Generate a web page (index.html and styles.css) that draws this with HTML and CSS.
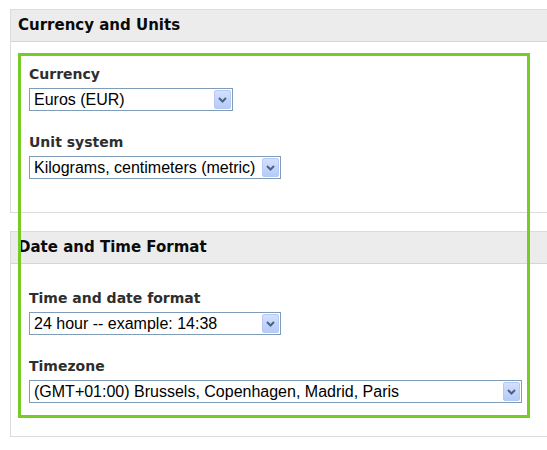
FILE: index.html
```html
<!DOCTYPE html>
<html>
<head>
<meta charset="utf-8">
<link rel="stylesheet" href="styles.css">
</head>
<body>
<div class="page">
  <section class="panel">
    <div class="panel-head">Currency and Units</div>
    <div class="panel-body">
      <div class="field">
        <div class="label">Currency</div>
        <div class="select w-sm"><span class="value">Euros (EUR)</span><span class="btn"><svg width="9" height="6" viewBox="0 0 9 6"><path d="M1 1 L4.5 4.5 L8 1" fill="none" stroke="#4d6185" stroke-width="2"/></svg></span></div>
      </div>
      <div class="field">
        <div class="label">Unit system</div>
        <div class="select w-md"><span class="value">Kilograms, centimeters (metric)</span><span class="btn"><svg width="9" height="6" viewBox="0 0 9 6"><path d="M1 1 L4.5 4.5 L8 1" fill="none" stroke="#4d6185" stroke-width="2"/></svg></span></div>
      </div>
    </div>
  </section>
  <section class="panel panel-2">
    <div class="panel-head">Date and Time Format</div>
    <div class="panel-body body-2">
      <div class="field">
        <div class="label">Time and date format</div>
        <div class="select w-md"><span class="value">24 hour -- example: 14:38</span><span class="btn"><svg width="9" height="6" viewBox="0 0 9 6"><path d="M1 1 L4.5 4.5 L8 1" fill="none" stroke="#4d6185" stroke-width="2"/></svg></span></div>
      </div>
      <div class="field">
        <div class="label">Timezone</div>
        <div class="select w-lg"><span class="value">(GMT+01:00) Brussels, Copenhagen, Madrid, Paris</span><span class="btn"><svg width="9" height="6" viewBox="0 0 9 6"><path d="M1 1 L4.5 4.5 L8 1" fill="none" stroke="#4d6185" stroke-width="2"/></svg></span></div>
      </div>
    </div>
  </section>
  <div class="highlight"></div>
</div>
</body>
</html>
```

FILE: styles.css
```css
html, body {
  margin: 0;
  padding: 0;
  background: #ffffff;
  overflow: hidden;
}
.page {
  position: relative;
  width: 547px;
  height: 450px;
  padding-top: 9px;
  box-sizing: border-box;
}
.panel {
  margin-left: 10px;
  margin-right: -20px;
  border: 1px solid #dcdcdc;
  background: #ffffff;
}
.panel-2 {
  margin-top: 18px;
}
.panel-head {
  height: 31px;
  line-height: 31px;
  background: #ececec;
  border-bottom: 1px solid #d6d6d6;
  padding-left: 7px;
  font-family: "DejaVu Sans", Verdana, sans-serif;
  font-weight: bold;
  font-size: 15px;
  color: #0a0a0a;
}
.panel-body {
  padding: 24px 18px 33px 18px;
  display: flex;
  flex-direction: column;
  gap: 23px;
}
.body-2 {
  padding-top: 26px;
  padding-bottom: 33px;
}
.field {
  display: flex;
  flex-direction: column;
  gap: 5px;
}
.label {
  font-family: "DejaVu Sans", Verdana, sans-serif;
  font-weight: bold;
  font-size: 14px;
  line-height: 17px;
  color: #2e2e2e;
}
.select {
  box-sizing: border-box;
  height: 23px;
  border: 1px solid #7f9db9;
  background: #ffffff;
  display: flex;
  align-items: center;
  justify-content: space-between;
  padding: 0 1px 0 4px;
  font-family: "Liberation Sans", Arial, sans-serif;
  font-size: 16px;
  color: #000000;
}
.value {
  white-space: nowrap;
  overflow: hidden;
}
.w-sm { width: 204px; }
.w-md { width: 252px; }
.w-lg { width: 493px; }
.btn {
  box-sizing: border-box;
  width: 17px;
  height: 19px;
  flex: none;
  border: 1px solid #b6c8f3;
  border-radius: 2px;
  background: linear-gradient(#d3e0fd, #b7cbf9);
  display: flex;
  align-items: center;
  justify-content: center;
}
.highlight {
  position: absolute;
  left: 18px;
  top: 53px;
  width: 512px;
  height: 365px;
  box-sizing: border-box;
  border: 3px solid #76cb25;
  pointer-events: none;
}
```
